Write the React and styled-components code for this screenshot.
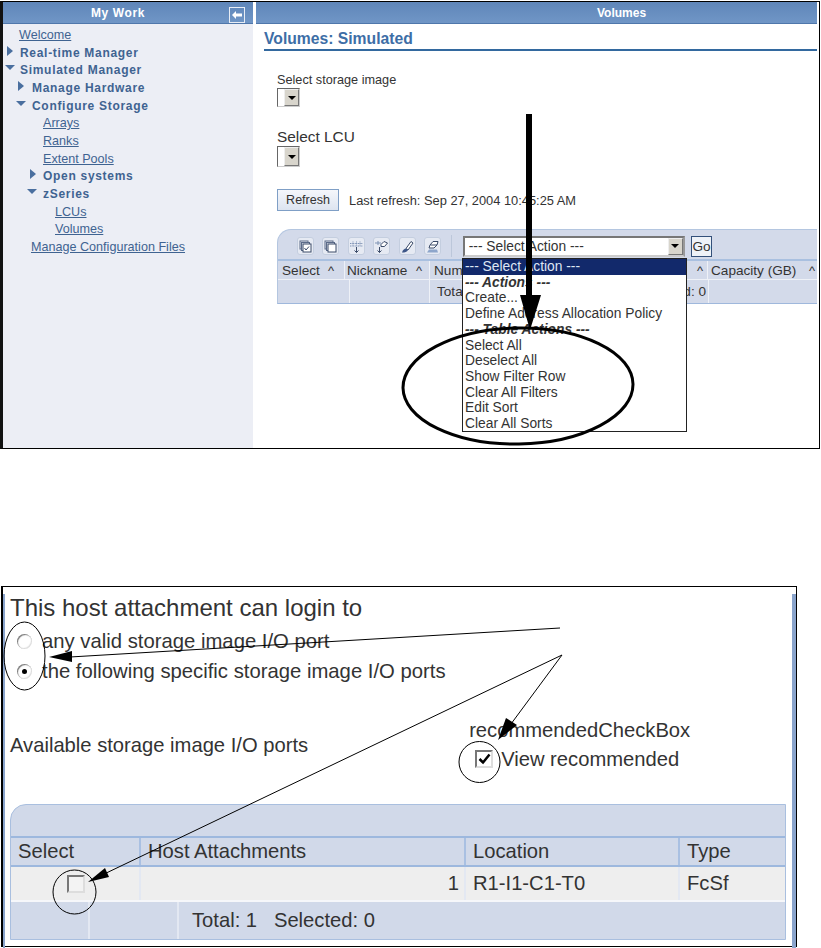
import React from "react";
import styled, { createGlobalStyle } from "styled-components";

const Global = createGlobalStyle`
html,body{margin:0;padding:0;background:#fff;}
body{font-family:"Liberation Sans",Arial,sans-serif;color:#333;}
`;
const Page = styled.div`
position:relative;
width:821px;
height:948px;
overflow:hidden;
padding-top:1px;
box-sizing:border-box;
`;
const Shot = styled.div`
display:grid;
grid-template-columns:250px 1fr;
column-gap:3px;
box-sizing:border-box;
width:820px;
height:448px;
border:1px solid #000;
border-left:3px solid #111;
padding-right:2px;
`;
const Band = styled.div`
height:21px;
display:flex;
align-items:center;
justify-content:center;
padding:${({ $pad }) => $pad || "0"};
color:#fff;
font-weight:bold;
font-size:12px;
letter-spacing:${({ $track }) => $track || 0}px;
background:linear-gradient(#5f86b9,#7096c6);
border-bottom:1px solid #4f77ab;
`;
const Side = styled.div`
display:flex;
flex-direction:column;
background:#eceef5;
`;
const Collapse = styled.div`
position:absolute;
left:229px;
top:7px;
width:14px;
height:14px;
border:1px solid #e8edf5;
display:flex;
align-items:center;
justify-content:center;
`;
const Tree = styled.div`
padding-top:3px;
`;
const Row = styled.div`
height:17.67px;
line-height:17.67px;
padding-left:${({ $x }) => $x}px;
font-size:${({ $bold }) => ($bold ? 12 : 12.6)}px;
position:relative;
color:#3f6391;
font-weight:${({ $bold }) => ($bold ? "bold" : "normal")};
letter-spacing:${({ $bold }) => ($bold ? "0.7px" : "0")};
text-decoration:${({ $bold }) => ($bold ? "none" : "underline")};
white-space:nowrap;
`;
const Twist = styled.span`
position:absolute;
left:${({ $x }) => $x}px;
top:${({ $open }) => ($open ? 3 : 1)}px;
width:0;
height:0;
${({ $open }) =>
  $open
    ? "border-left:5px solid transparent;border-right:5px solid transparent;border-top:5px solid #4a6f9f;"
    : "border-top:5px solid transparent;border-bottom:5px solid transparent;border-left:6px solid #4a6f9f;"}
`;
const Main = styled.div`
display:flex;
flex-direction:column;
min-width:0;
`;
const Heading = styled.div`
margin:6px 0 0 8px;
height:19px;
line-height:18px;
font-size:15.7px;
font-weight:bold;
color:#3d6ea6;
border-bottom:2px solid #33699f;
white-space:nowrap;
`;
const Field = styled.div`
margin:${({ $top }) => $top}px 0 0 21px;
`;
const FieldLabel = styled.div`
font-size:${({ $size }) => $size || 12.7}px;
line-height:${({ $line }) => $line || 14}px;
color:#333;
`;
const MiniSelect = styled.div`
width:23px;
height:${({ $h }) => $h || 19}px;
box-sizing:border-box;
border:1px solid #666;
border-right-color:#ccc;
border-bottom-color:#ccc;
display:flex;
justify-content:flex-end;
margin-top:${({ $top }) => $top || 0}px;
`;
const DropBtn = styled.div`
width:15px;
background:#d8d5cc;
border:1px solid #eee;
border-right-color:#777;
border-bottom-color:#777;
box-sizing:border-box;
display:flex;
align-items:center;
justify-content:center;
&::after{
  content:"";
  border-left:4px solid transparent;
  border-right:4px solid transparent;
  border-top:4px solid #000;
}
`;
const RefreshRow = styled.div`
display:flex;
align-items:center;
gap:10px;
margin:22px 0 0 21px;
font-size:12.85px;
white-space:nowrap;
`;
const Refresh = styled.div`
width:62px;
height:22px;
box-sizing:border-box;
display:flex;
align-items:center;
justify-content:center;
border:1px solid #7f9fc6;
background:linear-gradient(#f5f7fb,#dde4f0);
font-size:12.5px;
`;
const Table = styled.div`
position:relative;
margin:18px 0 0 21px;
background:#d3daea;
border-top:1px solid #b4c6e0;
border-left:1px solid #b4c6e0;
border-bottom:1px solid #9fb8dc;
border-top-left-radius:14px;
font-size:13.6px;
`;
const Toolbar = styled.div`
height:31px;
box-sizing:border-box;
padding:3px 0 0 19px;
display:flex;
align-items:center;
gap:8.4px;
border-bottom:2px solid #a9c0e0;
`;
const Tool = styled.div`
width:17px;
height:18px;
border-radius:3px;
background:#e6eaf3;
border:1px solid #c4cedf;
box-sizing:border-box;
display:flex;
align-items:center;
justify-content:center;
`;
const Sep = styled.div`
width:1px;
height:22px;
background:#bcc7da;
margin:0 2px 0 2px;
`;
const ActionSelect = styled.div`
width:222px;
height:21px;
box-sizing:border-box;
display:flex;
justify-content:space-between;
align-items:stretch;
background:#fff;
border:2px solid #777;
border-right-color:#999;
border-bottom-color:#ccc;
padding-left:4px;
line-height:17px;
font-size:13.8px;
`;
const Go = styled.div`
width:21px;
height:21px;
box-sizing:border-box;
margin-left:-2px;
border:1px solid #33507a;
background:#eef2f8;
display:flex;
align-items:center;
justify-content:center;
`;
const Cols = styled.div`
display:flex;
height:${({ $h }) => $h}px;
align-items:center;
border-bottom:${({ $line }) => ($line ? "1px solid #eef1f7" : "none")};
white-space:nowrap;
`;
const Col = styled.div`
width:${({ $w }) => $w}px;
flex:${({ $w }) => ($w ? "none" : "1")};
height:100%;
box-sizing:border-box;
display:flex;
align-items:center;
justify-content:space-between;
padding:${({ $pad }) => $pad || "0 4px"};
border-right:1px solid #eef1f7;
overflow:hidden;
&:last-child{border-right:0;}
`;
const Caret = styled.span`
font-size:13px;
line-height:13px;
`;
const Menu = styled.div`
position:absolute;
left:462px;
top:258px;
width:225px;
height:174px;
box-sizing:border-box;
background:#fff;
border:1px solid #222;
font-size:13.8px;
line-height:15.7px;
color:#333;
`;
const MenuItem = styled.div`
padding-left:2px;
white-space:nowrap;
color:${({ $on }) => ($on ? "#dfe6f4" : "#333")};
background:${({ $on }) => ($on ? "#12296b" : "transparent")};
font-weight:${({ $head }) => ($head ? "bold" : "normal")};
font-style:${({ $head }) => ($head ? "italic" : "normal")};
`;
const Dialog = styled.div`
margin:137px 0 0 1px;
width:796px;
height:361px;
box-sizing:border-box;
border:1px solid #000;
border-left-width:2px;
`;
const DialogInner = styled.div`
height:100%;
box-sizing:border-box;
border-left:2px solid #8aa4cc;
border-right:4px solid #8aa4cc;
padding-left:5px;
color:#333;
`;
const Big = styled.div`
font-size:${({ $size }) => $size || 20.2}px;
line-height:${({ $h }) => $h || 22}px;
margin-top:${({ $top }) => $top || 0}px;
white-space:nowrap;
`;
const Choices = styled.div`
margin-top:4px;
`;
const Choice = styled.div`
display:flex;
align-items:center;
gap:10px;
height:30px;
padding-left:7px;
font-size:20.3px;
white-space:nowrap;
`;
const Radio = styled.span`
position:relative;
width:15px;
height:15px;
border-radius:50%;
background:#fff;
box-shadow:inset 1px 1px 1px #777, inset -1px -1px 1px #ddd;
display:flex;
align-items:center;
justify-content:center;
&::after{
  content:"";
  width:5px;
  height:5px;
  border-radius:50%;
  background:${({ $on }) => ($on ? "#000" : "transparent")};
}
`;
const PortRow = styled.div`
display:flex;
margin-top:33px;
`;
const Recommended = styled.div`
margin-left:161px;
font-size:20.2px;
line-height:22px;
white-space:nowrap;
`;
const ViewRow = styled.div`
display:flex;
align-items:center;
gap:8px;
padding-left:6px;
margin-top:7px;
`;
const Check = styled.span`
width:18px;
height:18px;
box-sizing:border-box;
border:2px solid #777;
border-right-color:#ddd;
border-bottom-color:#ddd;
background:${({ $empty }) => ($empty ? "#f3f3f3" : "#fff")};
display:flex;
align-items:center;
justify-content:center;
`;
const HostTable = styled.div`
margin-top:34px;
width:776px;
height:136px;
box-sizing:border-box;
background:#d1d9e9;
border:1px solid #a9bfdf;
border-top-left-radius:16px;
font-size:20.2px;
`;
const HostBand = styled.div`
height:31px;
border-bottom:2px solid #9db8de;
`;
const HostRow = styled.div`
display:grid;
grid-template-columns:${({ $cols }) => $cols};
height:${({ $h }) => $h}px;
background:${({ $fill }) => $fill || "transparent"};
border-bottom:${({ $line }) => $line || "none"};
box-sizing:border-box;
`;
const HostCell = styled.div`
display:flex;
align-items:center;
justify-content:${({ $end, $mid }) => ($end ? "flex-end" : $mid ? "center" : "flex-start")};
padding:0 5px 0 ${({ $left }) => $left || 7}px;
border-right:2px solid ${({ $soft }) => ($soft ? "#e3e8f2" : "#a9c0e2")};
white-space:nowrap;
&:last-child{border-right:0;}
`;
const Marks = styled.svg`
position:absolute;
left:0;
top:0;
pointer-events:none;
`;

const tools = [
  <><rect x="1" y="1" width="8" height="8" stroke="#5a6a88" /><rect x="2.500" y="2.500" width="8" height="8" stroke="#5a6a88" fill="#dfe4ee" /><rect x="4" y="4" width="8" height="8" fill="#fff" /><path d="M5.500 8l1.500 2 3-3.500" /></>,
  <><rect x="1" y="1" width="8" height="8" stroke="#5a6a88" /><rect x="2.500" y="2.500" width="8" height="8" stroke="#5a6a88" fill="#dfe4ee" /><rect x="4" y="4" width="8" height="8" fill="#fff" /></>,
  <><path d="M0 3.500h13M0 6h13M3 1.500v4M6.500 1.500v4M10 1.500v4" stroke="#7f93b5" strokeDasharray="1 .6" /><path d="M6.500 7v5.500M4.500 10.500l2 2 2-2" /></>,
  <><path d="M0 3h6M3 1v4" stroke="#7f93b5" /><path d="M6 4.500L9 1.500l3.500 1.500-3 3.500H6z" fill="#fff" /><path d="M4.500 7v5.500M2.500 10.500l2 2 2-2" /></>,
  <><path d="M5 8.500L10 1.500l2 1.500-5 7z" fill="#fff" /><path d="M1 12.500c1-3 2.500-4 4-4l2 1.500c-1 2-3 2.500-6 2.500z" fill="#3d5688" stroke="none" /></>,
  <><path d="M3 8l1-3 3-3.500h5l-1 3.500-3 3z" fill="#fff" /><path d="M4.500 5h6.500" /><path d="M1 12.500l2-3h8l1 3z" fill="#8ea6cb" stroke="none" /></>,
];

const tree = [
  { t: "Welcome", x: 16 },
  { t: "Real-time Manager", x: 17, bold: true, tw: 4 },
  { t: "Simulated Manager", x: 17, bold: true, tw: 2, open: true },
  { t: "Manage Hardware", x: 29, bold: true, tw: 15 },
  { t: "Configure Storage", x: 29, bold: true, tw: 13, open: true },
  { t: "Arrays", x: 40 },
  { t: "Ranks", x: 40 },
  { t: "Extent Pools", x: 40 },
  { t: "Open systems", x: 40, bold: true, tw: 27 },
  { t: "zSeries", x: 40, bold: true, tw: 24, open: true },
  { t: "LCUs", x: 52 },
  { t: "Volumes", x: 52 },
  { t: "Manage Configuration Files", x: 28 },
];

const menu = [
  { t: "--- Select Action ---", on: true },
  { t: "--- Actions ---", head: true },
  { t: "Create..." },
  { t: "Define Address Allocation Policy" },
  { t: "--- Table Actions ---", head: true },
  { t: "Select All" },
  { t: "Deselect All" },
  { t: "Show Filter Row" },
  { t: "Clear All Filters" },
  { t: "Edit Sort" },
  { t: "Clear All Sorts" },
];

const hostCols = "130px 325px 214px 1fr";

export default function App() {
  return (
    <Page>
      <Global />
      <Shot>
        <Side>
          <Band $pad="0 20px 0 0" $track={0.6}>My Work</Band>
          <Collapse>
            <svg width="10" height="8" viewBox="0 0 10 8"><path d="M0 4l4-4v2.500h6v3H4V8z" fill="#fff" /></svg>
          </Collapse>
          <Tree>
            {tree.map((r) => (
              <Row key={r.t} $x={r.x} $bold={r.bold}>
                {r.tw !== undefined && <Twist $x={r.tw} $open={r.open} />}
                {r.t}
              </Row>
            ))}
          </Tree>
        </Side>
        <Main>
          <Band $pad="0 0 0 170px">Volumes</Band>
          <Heading>Volumes: Simulated</Heading>
          <Field $top={22}>
            <FieldLabel>Select storage image</FieldLabel>
            <MiniSelect $top={1}><DropBtn /></MiniSelect>
          </Field>
          <Field $top={20}>
            <FieldLabel $size={15.4} $line={19}>Select LCU</FieldLabel>
            <MiniSelect $h={21}><DropBtn /></MiniSelect>
          </Field>
          <RefreshRow>
            <Refresh>Refresh</Refresh>
            Last refresh: Sep 27, 2004 10:45:25 AM
          </RefreshRow>
          <Table>
            <Toolbar>
              {tools.map((d, i) => (
                <Tool key={i}>
                  <svg width="13" height="13" viewBox="0 0 13 13" fill="none" stroke="#3a4a68" strokeWidth="1">{d}</svg>
                </Tool>
              ))}
              <Sep />
              <ActionSelect>
                --- Select Action ---
                <DropBtn />
              </ActionSelect>
              <Go>Go</Go>
            </Toolbar>
            <Cols $h={18} $line>
              <Col $w={67} $pad="0 10px 0 4px">Select <Caret>^</Caret></Col>
              <Col $w={85} $pad="0 7px 0 2px">Nickname <Caret>^</Caret></Col>
              <Col $w={278}>Number <Caret>^</Caret></Col>
              <Col $pad="0 2px 0 3px">Capacity (GB) <Caret>^</Caret></Col>
            </Cols>
            <Cols $h={23}>
              <Col $w={72} />
              <Col $w={80} />
              <Col $w={279} $pad="0 2px 0 7px">
                <span>Total: 0</span>
                <span>Filtered: 0</span>
                <span>Displayed: 0</span>
                <span>Selected: 0</span>
              </Col>
              <Col />
            </Cols>
          </Table>
        </Main>
      </Shot>
      <Menu>
        {menu.map((m) => (
          <MenuItem key={m.t} $on={m.on} $head={m.head}>{m.t}</MenuItem>
        ))}
      </Menu>
      <Dialog>
        <DialogInner>
          <Big $size={24} $h={28} $top={7}>This host attachment can login to</Big>
          <Choices>
            <Choice><Radio />any valid storage image I/O port</Choice>
            <Choice><Radio $on />the following specific storage image I/O ports</Choice>
          </Choices>
          <PortRow>
            <Big $top={15}>Available storage image I/O ports</Big>
            <div>
              <Recommended>recommendedCheckBox</Recommended>
              <Recommended>
                <ViewRow>
                  <Check>
                    <svg width="13" height="12" viewBox="0 0 13 12"><path d="M1.500 6l3.500 3.500 6.500-8" fill="none" stroke="#000" strokeWidth="2.500" /></svg>
                  </Check>
                  View recommended
                </ViewRow>
              </Recommended>
            </div>
          </PortRow>
          <HostTable>
            <HostBand />
            <HostRow $cols={hostCols} $h={29} $line="2px solid #9db8de">
              <HostCell>Select</HostCell>
              <HostCell>Host Attachments</HostCell>
              <HostCell>Location</HostCell>
              <HostCell>Type</HostCell>
            </HostRow>
            <HostRow $cols={hostCols} $h={35} $fill="#eeeeee" $line="2px solid #f6f7fa">
              <HostCell $mid $soft><Check $empty /></HostCell>
              <HostCell $end $soft>1</HostCell>
              <HostCell $soft>R1-I1-C1-T0</HostCell>
              <HostCell>FcSf</HostCell>
            </HostRow>
            <HostRow $cols="79px 89px 1fr" $h={37}>
              <HostCell $soft />
              <HostCell $soft />
              <HostCell $left={13}>Total: 1 &nbsp; Selected: 0</HostCell>
            </HostRow>
          </HostTable>
        </DialogInner>
      </Dialog>
      <Marks width="821" height="948" viewBox="0 0 821 948" fill="none" stroke="#000">
        <path d="M529 114V298" strokeWidth="6" />
        <path d="M520 295L541 295L530 330Z" fill="#000" stroke="none" />
        <ellipse cx="518" cy="386" rx="115" ry="58" strokeWidth="3" transform="rotate(-1 518 386)" />
        <path d="M560 628L70 657" strokeWidth="1" />
        <path d="M49 657L72 651L72 662Z" fill="#000" stroke="none" />
        <ellipse cx="24.500" cy="656" rx="20.500" ry="34" strokeWidth="1" />
        <path d="M562 655L100 876" strokeWidth="1" />
        <path d="M88 882L105 868L109 877Z" fill="#000" stroke="none" />
        <path d="M562 655L508 728" strokeWidth="1" />
        <path d="M498 740L506 718L517 725Z" fill="#000" stroke="none" />
        <circle cx="479.500" cy="762" r="20.500" strokeWidth="1" />
        <ellipse cx="74.500" cy="892" rx="21.500" ry="22" strokeWidth="1" />
      </Marks>
    </Page>
  );
}
